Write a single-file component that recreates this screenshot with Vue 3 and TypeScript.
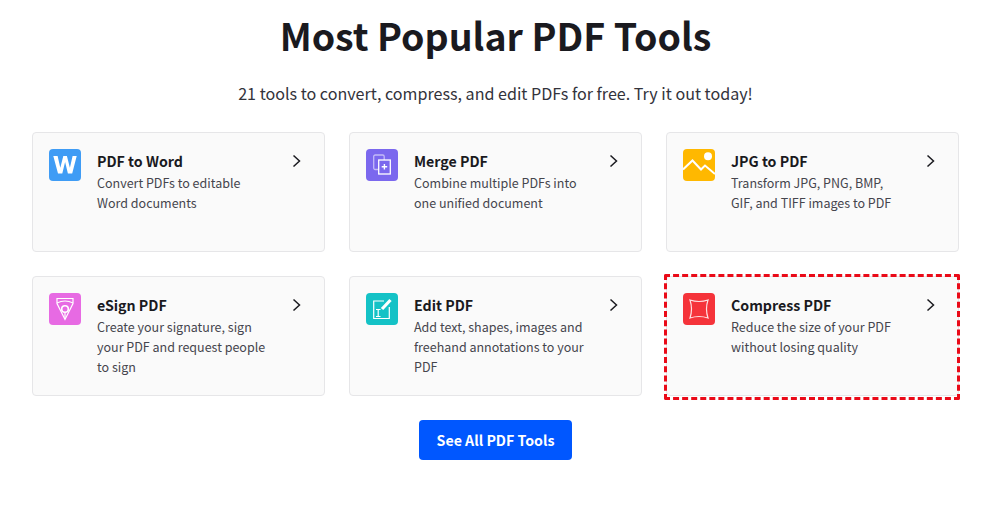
<script setup lang="ts">
interface Tool {
  name: string
  icon: string
  color: string
  lines: string[]
  marked?: boolean
}

const tools: Tool[] = [
  { name: 'PDF to Word', icon: 'word', color: '#3f9cf5', lines: ['Convert PDFs to editable', 'Word documents'] },
  { name: 'Merge PDF', icon: 'merge', color: '#7b68ee', lines: ['Combine multiple PDFs into', 'one unified document'] },
  { name: 'JPG to PDF', icon: 'jpg', color: '#ffb800', lines: ['Transform JPG, PNG, BMP,', 'GIF, and TIFF images to PDF'] },
  { name: 'eSign PDF', icon: 'sign', color: '#e76ae3', lines: ['Create your signature, sign', 'your PDF and request people', 'to sign'] },
  { name: 'Edit PDF', icon: 'edit', color: '#14c2c6', lines: ['Add text, shapes, images and', 'freehand annotations to your', 'PDF'] },
  { name: 'Compress PDF', icon: 'compress', color: '#f5333a', lines: ['Reduce the size of your PDF', 'without losing quality'], marked: true },
]
</script>

<template>
  <main class="page">
    <h1 class="title">Most Popular PDF Tools</h1>
    <p class="subtitle">21 tools to convert, compress, and edit PDFs for free. Try it out today!</p>

    <section class="grid">
      <article v-for="tool in tools" :key="tool.name" class="card" :class="{ marked: tool.marked }">
        <svg class="icon" viewBox="0 0 32 32" fill="none">
          <rect width="32" height="32" rx="4" :fill="tool.color" />
          <path v-if="tool.icon === 'word'" d="M4.300 7h4.300l2.700 11.800L14.300 7h3.600l3 11.800L23.600 7h4.100l-4.500 17.500h-4.300L16.100 13l-2.800 11.500H9z" fill="#fff" />
          <g v-else-if="tool.icon === 'merge'" stroke="#fff">
            <rect x="7.700" y="6" width="10.500" height="14.500" rx="1.500" stroke-opacity=".55" stroke-width="1.300" />
            <rect x="12.700" y="11" width="11.600" height="14" fill="#7b68ee" stroke-width="1.300" />
            <path d="M18.400 15v5.500M15.700 17.800h5.500" stroke-width="1.400" />
          </g>
          <g v-else-if="tool.icon === 'jpg'">
            <circle cx="25" cy="7.300" r="4" fill="#fff" />
            <path d="M0 20.500 9.500 11.500 18 20.500 22 16.500 32 25" stroke="#fff" stroke-width="2" />
          </g>
          <g v-else-if="tool.icon === 'sign'" stroke="#fff" stroke-width="1.200">
            <path d="M8 5.500h16v5l-8 16-8-16z" />
            <path d="M8 10c5-2.500 11-2.500 16 0" />
            <circle cx="16" cy="16" r="3.300" stroke-width="1.600" />
            <path d="M16 19.500V26" />
          </g>
          <g v-else-if="tool.icon === 'edit'" stroke="#fff">
            <path d="M18 8H7.700v17.500h15.600V14" stroke-width="1.200" />
            <path d="M16 16 24.500 7" stroke-width="3.200" />
            <path d="M10 16.500h4.500M12.200 16.500v7M10 23.500h4.500" stroke-width="1.200" />
          </g>
          <path v-else d="M7 7c6 2 12 2 18 0-2 6-2 12 0 18-6-2-12-2-18 0 2-6 2-12 0-18z" stroke="#fff" stroke-opacity=".85" stroke-width="1.200" />
        </svg>

        <div class="body">
          <h2 class="name">{{ tool.name }}</h2>
          <p v-for="line in tool.lines" :key="line" class="desc">{{ line }}</p>
        </div>

        <svg class="arrow" viewBox="0 0 12 14" fill="none">
          <path d="M2.500 1.500 8.500 7l-6 5.500" stroke="#1a1a1f" stroke-width="1.500" />
        </svg>
      </article>
    </section>

    <div class="actions">
      <a class="btn">See All PDF Tools</a>
    </div>
  </main>
</template>

<style scoped>
.page {
  box-sizing: border-box;
  width: 983px;
  height: 505px;
  overflow: hidden;
  padding: 0 24px 0 32px;
  font-family: 'Noto Sans CJK SC', 'Noto Sans', sans-serif;
  background: #fff;
  color: #1a1a1f;
}

.title {
  margin: 0;
  padding-top: 10px;
  text-align: center;
  font-size: 37.5px;
  line-height: 50px;
  font-weight: 700;
}

.subtitle {
  margin: 17px 0 0;
  text-align: center;
  font-size: 16.1px;
  line-height: 32px;
  color: #33333b;
}

.grid {
  display: grid;
  grid-template-columns: repeat(3, 293px);
  grid-auto-rows: 120px;
  gap: 24px;
  margin-top: 23px;
}

.card {
  position: relative;
  box-sizing: border-box;
  display: flex;
  padding: 16px;
  border: 1px solid #e6e6e8;
  border-radius: 4px;
  background: #fafafa;
}

.card.marked::after {
  content: '';
  position: absolute;
  inset: -3px -2px -5px -3px;
  border: 3px dashed #ea0a18;
  border-radius: 2px;
}

.icon {
  flex: none;
  width: 32px;
  height: 32px;
}

.body {
  flex: 1;
  margin-left: 16px;
}

.name {
  margin: 0;
  font-size: 14.2px;
  line-height: 24px;
  font-weight: 700;
  color: #1a1a1f;
}

.desc {
  margin: 0;
  font-size: 12.5px;
  line-height: 20px;
  white-space: nowrap;
  color: #45454d;
}

.arrow {
  flex: none;
  width: 12px;
  height: 14px;
  margin: 5px 5px 0 0;
}

.actions {
  display: flex;
  justify-content: center;
  margin-top: 24px;
}

.btn {
  display: block;
  padding: 0 17.5px;
  height: 40px;
  line-height: 40px;
  border-radius: 4px;
  background: #0057ff;
  color: #fff;
  font-size: 14.2px;
  font-weight: 700;
}
</style>

<style>
html,
body {
  margin: 0;
  background: #fff;
}
</style>
